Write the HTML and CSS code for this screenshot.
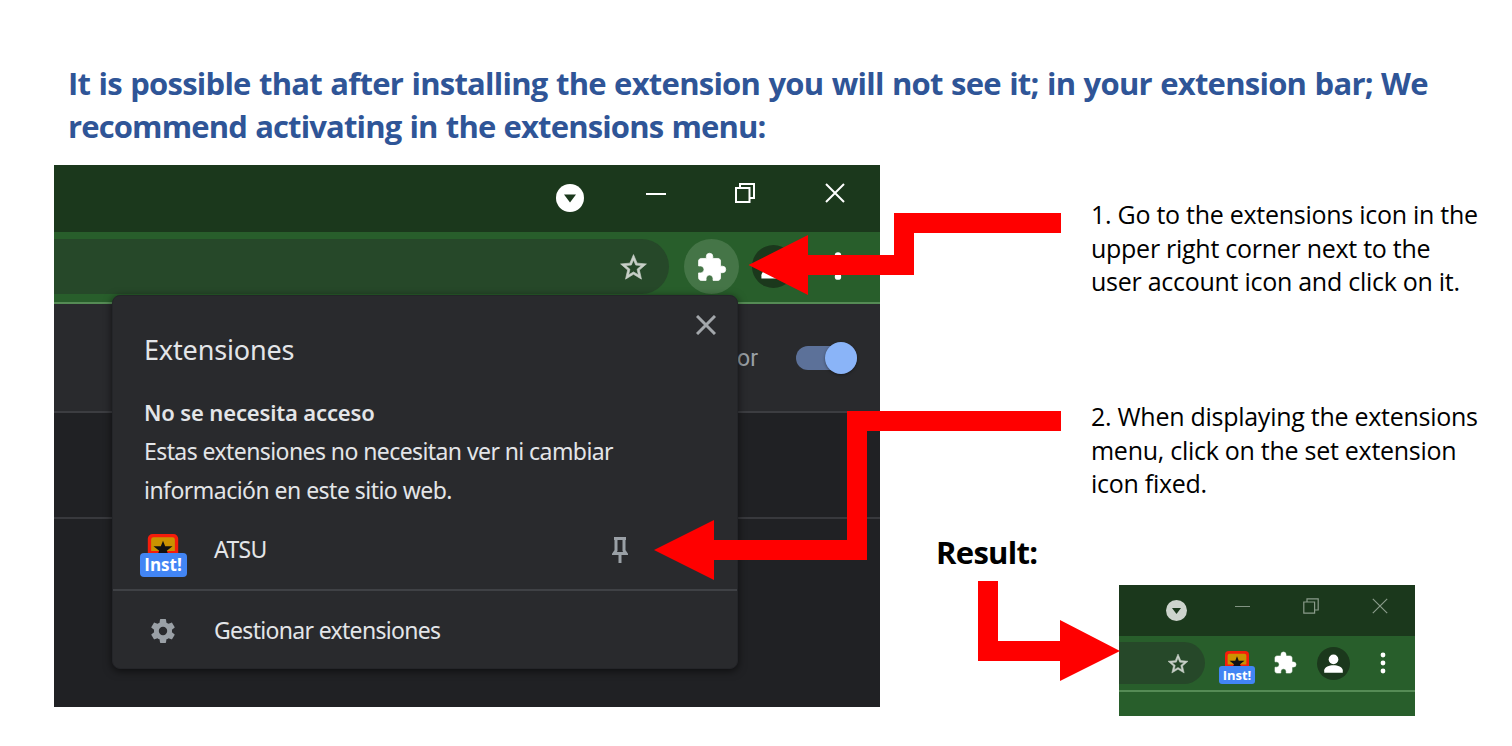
FILE: index.html
```html
<!DOCTYPE html>
<html lang="en">
<head>
<meta charset="utf-8">
<title>Activating the extension</title>
<link rel="stylesheet" href="styles.css">
</head>
<body>
<svg class="defs" aria-hidden="true">
  <defs>
    <symbol id="drop" viewBox="0 0 28 28"><circle cx="14" cy="14" r="14"/><path d="M8 10.500h12l-6 8z" fill="#1b381c"/></symbol>
    <symbol id="star" viewBox="0 0 24 24"><path d="M22 9.240l-7.190-.62L12 2 9.190 8.630 2 9.240l5.460 4.730L5.820 21 12 17.270 18.180 21l-1.630-7.030L22 9.240zM12 15.400l-3.760 2.270 1-4.280-3.320-2.880 4.380-.38L12 6.100l1.710 4.040 4.380.38-3.320 2.880 1 4.280L12 15.400z" stroke="currentColor" stroke-width=".5"/></symbol>
    <symbol id="puzzle" viewBox="0 0 24 24"><path d="M20.500 11H19V7c0-1.100-.9-2-2-2h-4V3.500a2.500 2.500 0 0 0-5 0V5H4c-1.100 0-2 .9-2 2v3.800h1.500c1.490 0 2.700 1.210 2.700 2.700s-1.210 2.700-2.700 2.700H2V20c0 1.100.9 2 2 2h3.800v-1.500c0-1.490 1.210-2.700 2.700-2.700s2.700 1.210 2.700 2.700V22H17c1.100 0 2-.9 2-2v-4h1.500a2.500 2.500 0 0 0 0-5z" stroke="currentColor" stroke-width=".6" stroke-linejoin="round"/></symbol>
    <symbol id="user" viewBox="0 0 32 32"><circle cx="16" cy="16" r="16" fill="#1b381c"/><circle cx="16" cy="12" r="4.700"/><path d="M7 25v-2.400c0-3.300 5-5 9-5s9 1.700 9 5V25z"/></symbol>
    <symbol id="restore" viewBox="0 0 20 20"><path d="M1 5h13.500v14H1zM5 5V1h14v14h-4.500" fill="none" stroke="currentColor"/></symbol>
    <symbol id="cross" viewBox="0 0 20 20"><path d="M1 1l18 18M19 1L1 19" fill="none" stroke="currentColor"/></symbol>
    <symbol id="app" viewBox="0 0 32 20"><path d="M0 20V5a5 5 0 0 1 5-5h22a5 5 0 0 1 5 5v15z" fill="#f51d0b"/><path d="M3.500 18V6a2.500 2.500 0 0 1 2.500-2.500h20A2.500 2.500 0 0 1 28.500 6v12z" fill="#cb9200"/><path d="M16 7l2.300 6H26l-6 4.500 1 2.500H11l1-2.500-6-4.500h7.700z" fill="#111"/></symbol>
    <symbol id="dots" viewBox="0 0 6 22"><circle cx="3" cy="3" r="2.400"/><circle cx="3" cy="11" r="2.400"/><circle cx="3" cy="19" r="2.400"/></symbol>
    <symbol id="pin" viewBox="0 0 16 26"><path d="M2 1.500h12M4 1v12.500L2 16.500h12l-2-3V1M8 17v9" fill="none" stroke="currentColor" stroke-width="3"/></symbol>
    <symbol id="gear" viewBox="2 2 20 20"><path d="M19.430 12.980c.04-.32.070-.640.070-.980s-.03-.66-.07-.98l2.110-1.650c.19-.15.240-.420.120-.640l-2-3.460c-.12-.22-.39-.3-.61-.22l-2.490 1c-.52-.4-1.080-.73-1.690-.98l-.38-2.650A.488.488 0 0 0 14 2h-4c-.25 0-.46.180-.49.420l-.38 2.650c-.61.250-1.170.590-1.690.980l-2.490-1c-.23-.09-.49 0-.61.220l-2 3.460c-.13.220-.07.490.120.640l2.110 1.650c-.04.320-.07.650-.07.980s.03.660.070.980l-2.110 1.650c-.19.150-.24.420-.12.640l2 3.460c.12.220.390.300.610.220l2.490-1c.52.400 1.080.730 1.690.980l.38 2.650c.03.240.240.420.490.420h4c.25 0 .46-.18.490-.42l.38-2.650c.61-.25 1.170-.59 1.690-.98l2.490 1c.23.090.490 0 .61-.22l2-3.460c.12-.22.070-.49-.12-.64l-2.110-1.650zM12 15.500a3.500 3.500 0 1 1 0-7 3.500 3.500 0 0 1 0 7z"/></symbol>
  </defs>
</svg>
<main class="guide">
  <h1 class="title"><span class="title-a">It is possible that after installing the extension you will not see it; in your extension bar; We</span><br><span class="title-b">recommend activating in the extensions menu:</span></h1>
  <div class="content">
    <section class="browser">
      <div class="tabs">
        <svg class="drop"><use href="#drop"/></svg>
        <i class="minimize"></i>
        <svg class="ctl"><use href="#restore"/></svg>
        <svg class="ctl"><use href="#cross"/></svg>
      </div>
      <div class="toolbar">
        <div class="omnibox"><svg class="star"><use href="#star"/></svg></div>
        <span class="ext-button"><svg><use href="#puzzle"/></svg></span>
        <svg class="avatar"><use href="#user"/></svg>
        <svg class="dots"><use href="#dots"/></svg>
      </div>
      <div class="page-head"><span>or</span><i class="toggle"></i></div>
      <div class="page-band"></div>
      <div class="page-rest"></div>
      <div class="popup">
        <header class="popup-head"><h2>Extensiones</h2><svg class="close"><use href="#cross"/></svg></header>
        <div class="access">
          <b>No se necesita acceso</b>
          <p>Estas extensiones no necesitan ver ni cambiar<br><span class="info">información en este sitio web.</span></p>
        </div>
        <div class="item"><span class="app"><svg><use href="#app"/></svg><em>Inst!</em></span><span class="name">ATSU</span><svg class="pin"><use href="#pin"/></svg></div>
        <div class="manage"><svg class="gear"><use href="#gear"/></svg><span class="name">Gestionar extensiones</span></div>
      </div>
    </section>
    <aside class="steps">
      <p class="step first">1. Go to the extensions icon in the<br>upper right corner next to the<br>user account icon and click on it.</p>
      <p class="step second">2. When displaying the extensions<br>menu, click on the set extension<br>icon fixed.</p>
      <div class="result">
        <strong>Result:</strong>
        <div class="mini">
          <div class="mini-tabs">
            <svg class="drop"><use href="#drop"/></svg>
            <i class="minimize"></i>
            <svg class="ctl"><use href="#restore"/></svg>
            <svg class="ctl"><use href="#cross"/></svg>
          </div>
          <div class="mini-bar">
            <div class="mini-omni"><svg class="star"><use href="#star"/></svg></div>
            <span class="app small"><svg><use href="#app"/></svg><em>Inst!</em></span>
            <svg class="mini-puzzle"><use href="#puzzle"/></svg>
            <svg class="avatar"><use href="#user"/></svg>
            <svg class="dots"><use href="#dots"/></svg>
          </div>
        </div>
      </div>
    </aside>
  </div>
  <svg class="arrows" viewBox="0 0 1512 746" aria-hidden="true">
    <path d="M748.500 265L808 235v20h86v-42h167v20H914v42H808v20z"/>
    <path d="M654 550l60-30v20h133V411h214v20H867v129H714v20z"/>
    <path d="M978 581h20v60h62v-21l60 31-60 30v-20h-82z"/>
  </svg>
</main>
</body>
</html>
```
FILE: styles.css
```css
* { box-sizing: border-box; }
body { margin: 0; background: #fff; font-family: "Open Sans", "Noto Sans", sans-serif; }
svg { display: block; flex: none; fill: currentColor; }
h1, h2, p { margin: 0; }
i, em { font-style: normal; }
.defs { position: absolute; width: 0; height: 0; }
.guide { position: relative; width: 1512px; height: 746px; overflow: hidden; padding: 62px 0 0 54px; }
.title { height: 103px; padding-left: 14px; color: #2f5597; font-size: 31px; line-height: 43px; font-weight: 700; white-space: nowrap; letter-spacing: -.75px; word-spacing: 1px; }
.title-b { letter-spacing: -.86px; }
.content { display: flex; }

.browser { position: relative; flex: none; width: 826px; height: 542px; background: #202124; color: #fff; overflow: hidden; }
.tabs { display: flex; height: 67px; background: #1b381c; padding: 17px 35px 0 502px; justify-content: space-between; }
.tabs .drop { width: 28px; height: 28px; margin-top: 2px; }
.tabs .minimize { width: 20px; height: 2px; background: #fff; margin: 11px 0 0 26px; }
.tabs .ctl { width: 20px; height: 20px; margin: 1px 0 0 34px; stroke-width: 2; }
.toolbar { display: flex; align-items: center; height: 72px; padding-bottom: 2px; background: #285e2b; border-bottom: 2px solid #558b55; }
.omnibox { display: flex; align-items: center; justify-content: flex-end; width: 615px; height: 55px; padding: 2px 20px 0 0; background: #264829; border-radius: 0 28px 28px 0; }
.star { width: 31px; height: 31px; color: #c8d0c8; }
.ext-button { display: flex; align-items: center; justify-content: center; width: 55px; height: 55px; margin-left: 15px; padding-top: 2px; border-radius: 50%; background: #457547; }
.ext-button svg { width: 31px; height: 31px; }
.toolbar .avatar { width: 43px; height: 43px; margin-left: 13px; }
.toolbar .dots { width: 8px; height: 30px; margin-left: 39px; }
.page-head { display: flex; align-items: center; justify-content: flex-end; gap: 38px; height: 109px; padding: 1px 23px 0 0; background: #292a2d; border-bottom: 2px solid #3c3d41; font: 23px Roboto, sans-serif; color: #9aa0a6; }
.toggle { display: flex; justify-content: flex-end; align-items: center; width: 61px; height: 24px; border-radius: 12px; background: #5c7199; }
.toggle::after { content: ""; width: 32px; height: 32px; border-radius: 50%; background: #8ab4f8; box-shadow: 0 1px 3px #0006; }
.page-band { height: 106px; border-bottom: 2px solid #38393d; }
.page-rest { height: 188px; }

.popup { position: absolute; left: 58px; top: 130px; width: 626px; height: 374px; background: #292a2d; border: 1px solid #242529; border-radius: 8px; box-shadow: 0 2px 8px #0009; color: #e3e5e8; font-family: "Noto Sans", sans-serif; font-size: 23px; white-space: nowrap; }
.popup-head { display: flex; justify-content: space-between; height: 96px; padding: 34px 21px 0 31px; }
.popup h2 { font-size: 27px; line-height: 40px; font-weight: 400; letter-spacing: -.15px; }
.close { width: 20px; height: 20px; margin-top: -15px; color: #a3a7ab; stroke-width: 3; }
.access { height: 119px; padding: 1px 0 0 31px; line-height: 39px; letter-spacing: -.58px; }
.access b { display: block; height: 39px; font-size: 22px; font-weight: 600; letter-spacing: -.15px; }
.info { letter-spacing: -.53px; }
.item { display: flex; align-items: center; height: 80px; padding-left: 26px; border-bottom: 2px solid #3f4145; }
.app { display: flex; flex-direction: column; align-items: center; width: 48px; }
.item .app { margin-top: 10px; }
.app svg { width: 32px; height: 19px; }
.app em { display: block; width: 47px; height: 24px; border-radius: 4px; background: #4285f4; color: #fff; text-align: center; font: 700 17px/24px "Open Sans", sans-serif; }
.name { margin-top: -2px; letter-spacing: -.68px; }
.item .name { margin-left: 27px; width: 398px; }
.pin { width: 16px; height: 26px; color: #9aa0a6; }
.manage { display: flex; align-items: center; height: 79px; padding-left: 38px; gap: 39px; }
.gear { width: 24px; height: 24px; color: #9aa0a6; }

.steps { display: flex; flex-direction: column; flex: 1; white-space: nowrap; color: #000; }
.step { padding-left: 211px; font-size: 25px; line-height: 33.500px; letter-spacing: -.27px; }
.first { height: 202px; padding-top: 33px; }
.second { height: 166px; padding-top: 33px; }
.result { display: flex; }
.result strong { width: 183px; height: 40px; margin-left: 56px; font-size: 31px; line-height: 38px; letter-spacing: -.7px; }
.mini { width: 296px; height: 131px; margin-top: 52px; background: #285e2b; color: #fff; }
.mini-tabs { display: flex; height: 51px; padding: 13px 27px 0 47px; justify-content: space-between; background: #1b381c; color: #8a9b8a; }
.mini .drop { width: 21px; height: 21px; margin-top: 2px; color: #cdd4cd; }
.mini .minimize { width: 15px; height: 1px; margin: 8px 0 0 5px; background: #829482; }
.mini .ctl { width: 16px; height: 16px; margin-left: 10px; stroke-width: 1.5; }
.mini-bar { display: flex; align-items: center; height: 56px; border-bottom: 2px solid #558b55; }
.mini-omni { display: flex; align-items: center; justify-content: flex-end; width: 86px; height: 42px; padding: 2px 15px 0 0; border-radius: 0 21px 21px 0; background: #264829; }
.mini .star { width: 24px; height: 24px; }
.small { width: 36px; margin: 9px 0 0 14px; }
.small svg { width: 24px; height: 15px; }
.small em { width: 36px; height: 18px; border-radius: 3px; font-size: 13px; line-height: 18px; }
.mini-puzzle { width: 24px; height: 24px; margin-left: 18px; }
.mini .avatar { width: 33px; height: 33px; margin-left: 20px; }
.mini .dots { width: 6px; height: 22px; margin-left: 30px; }
.arrows { position: absolute; inset: 0; width: 1512px; height: 746px; fill: #f00; }
```
